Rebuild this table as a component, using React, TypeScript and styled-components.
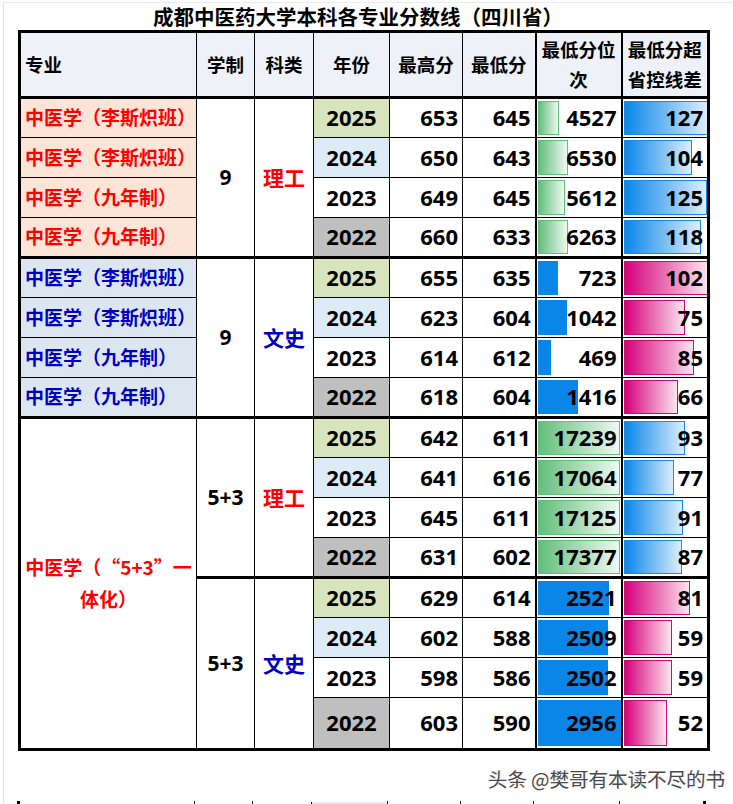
import React from "react";
import styled, { createGlobalStyle, css } from "styled-components";

const CJK = `"Noto Sans CJK SC", "Noto Sans", sans-serif`;
const NUM = `"Noto Sans", "Noto Sans CJK SC", sans-serif`;

const GlobalStyle = createGlobalStyle`
  html, body { margin: 0; padding: 0; background: #ffffff; }
  body { font-family: ${CJK}; color: #000; }
`;

type Tone = "red" | "blue";
type BarKind = "green" | "blue" | "solid" | "pink";

const toneColor: Record<Tone, string> = { red: "#FF0000", blue: "#0000C0" };

const yearBg: Record<number, string> = {
  2025: "#D8E4BC",
  2024: "#DDEBF7",
  2023: "#FFFFFF",
  2022: "#BFBFBF",
};

const COLS = [177, 58, 59, 76, 73, 73, 86, 87];

const Page = styled.main`
  width: 730px;
  height: 802px;
  margin: 2px 0 0 3px;
  overflow: hidden;
  box-sizing: border-box;
  padding-left: 14px;
  border-left: 1px solid #e4e4e4;
  border-top: 1px solid #ececec;
  background: #fff;
`;

const Title = styled.h1`
  margin: 0;
  width: 692px;
  height: 27px;
  line-height: 26px;
  padding-right: 12px;
  box-sizing: border-box;
  text-align: center;
  font-family: ${CJK};
  font-size: 20.5px;
  font-weight: 700;
  color: #000;
  white-space: nowrap;
`;

const Sheet = styled.table`
  border-collapse: collapse;
  table-layout: fixed;
  width: 692px;
  border: 3px solid #000;
`;

const Row = styled.tr<{ $h: number }>`
  height: ${(p) => p.$h}px;
`;

const cellBase = css<{ $top?: boolean; $thickLeft?: boolean }>`
  border: 1px solid #000;
  padding: 0 0 2px;
  vertical-align: middle;
  font-weight: 700;
  overflow: hidden;
  ${(p) => p.$top && "border-top: 3px solid #000;"}
  ${(p) => p.$thickLeft && "border-left: 2px solid #000;"}
`;

const HeadCell = styled.th<{ $left?: boolean; $thickLeft?: boolean }>`
  ${cellBase}
  background: #EEF1F7;
  border-bottom: 3px solid #000;
  font-family: ${CJK};
  font-size: 18.5px;
  line-height: 30px;
  text-align: ${(p) => (p.$left ? "left" : "center")};
  padding: 0 ${(p) => (p.$left ? "0" : "1px")} 2px ${(p) => (p.$left ? "4px" : "1px")};
`;

const MajorCell = styled.td<{ $top?: boolean; $bg: string; $tone: Tone; $center?: boolean }>`
  ${cellBase}
  background: ${(p) => p.$bg};
  color: ${(p) => toneColor[p.$tone]};
  font-family: ${CJK};
  font-size: 19px;
  line-height: 32px;
  text-align: ${(p) => (p.$center ? "center" : "left")};
  padding: 0 4px 2px 4px;
  white-space: ${(p) => (p.$center ? "normal" : "nowrap")};
  text-spacing-trim: space-all;
`;

const Quote = styled.span`
  font-feature-settings: "fwid" 1;
`;

const SystemCell = styled.td<{ $top?: boolean }>`
  ${cellBase}
  font-family: ${NUM};
  font-size: 21px;
  text-align: center;
  color: #000;
`;

const SubjectCell = styled.td<{ $top?: boolean; $tone: Tone }>`
  ${cellBase}
  font-family: ${CJK};
  font-size: 21px;
  text-align: center;
  color: ${(p) => toneColor[p.$tone]};
`;

const YearCell = styled.td<{ $top?: boolean; $year: number }>`
  ${cellBase}
  background: ${(p) => yearBg[p.$year]};
  font-family: ${NUM};
  font-size: 22px;
  text-align: center;
`;

const NumCell = styled.td<{ $top?: boolean; $thickLeft?: boolean }>`
  ${cellBase}
  font-family: ${NUM};
  font-size: 22px;
  text-align: right;
  padding-right: 4px;
`;

const BarCell = styled(NumCell)`
  position: relative;
`;

const barFill: Record<BarKind, string> = {
  green: "border: 1px solid #63BE7B; background: linear-gradient(to right, #63BE7B 0%, #EEF8F1 100%);",
  blue: "border: 1px solid #1A8AE6; background: linear-gradient(to right, #0A86E8 0%, #DCEEFC 100%);",
  solid: "background: #0A86E8;",
  pink: "border: 1px solid #C5106F; background: linear-gradient(to right, #D6007B 0%, #FBE4F0 100%);",
};

const Bar = styled.span<{ $kind: BarKind }>`
  position: absolute;
  left: 1px;
  top: 2px;
  bottom: 2px;
  box-sizing: border-box;
  ${(p) => barFill[p.$kind]}
`;

const Value = styled.span`
  position: relative;
  z-index: 1;
`;

const Watermark = styled.div`
  margin-top: 16px;
  height: 24px;
  line-height: 24px;
  padding-right: 8px;
  text-align: right;
  font-family: ${CJK};
  font-size: 19.5px;
  font-weight: 400;
  color: #4a4a4a;
  text-shadow: 1px 1px 0 #fff, -1px -1px 0 #fff, 1px 0 1px #bbb;
  white-space: nowrap;
`;

const Stub = styled.div`
  margin-top: 10px;
  display: grid;
  grid-template-columns: ${COLS.map((c) => `${c}px`).join(" ")};
  width: 692px;
  height: 12px;
  margin-left: -1px;
`;

const StubCell = styled.div<{ $first?: boolean; $last?: boolean; $bg?: string }>`
  border-left: ${(p) => (p.$first ? "3px" : "1px")} solid #000;
  ${(p) => p.$last && "border-right: 3px solid #000;"}
  background: ${(p) => p.$bg ?? "transparent"};
  margin-top: ${(p) => (p.$bg ? "1px" : "0")};
`;

type DataRow = {
  year: number;
  hi: number;
  lo: number;
  rank: number;
  diff: number;
  rankW: number;
  diffW: number;
};

type Group = {
  system: string;
  subject: string;
  tone: Tone;
  majors?: string[];
  majorBg?: string;
  spanMajor?: boolean;
  spanRows?: number;
  rankKind: BarKind;
  diffKind: BarKind;
  rows: DataRow[];
};

const groups: Group[] = [
  {
    system: "9",
    subject: "理工",
    tone: "red",
    majorBg: "#FCE4D6",
    majors: ["中医学（李斯炽班）", "中医学（李斯炽班）", "中医学（九年制）", "中医学（九年制）"],
    rankKind: "green",
    diffKind: "blue",
    rows: [
      { year: 2025, hi: 653, lo: 645, rank: 4527, diff: 127, rankW: 21, diffW: 84 },
      { year: 2024, hi: 650, lo: 643, rank: 6530, diff: 104, rankW: 30, diffW: 68 },
      { year: 2023, hi: 649, lo: 645, rank: 5612, diff: 125, rankW: 27, diffW: 83 },
      { year: 2022, hi: 660, lo: 633, rank: 6263, diff: 118, rankW: 30, diffW: 77 },
    ],
  },
  {
    system: "9",
    subject: "文史",
    tone: "blue",
    majorBg: "#DCE6F1",
    majors: ["中医学（李斯炽班）", "中医学（李斯炽班）", "中医学（九年制）", "中医学（九年制）"],
    rankKind: "solid",
    diffKind: "pink",
    rows: [
      { year: 2025, hi: 655, lo: 635, rank: 723, diff: 102, rankW: 20, diffW: 84 },
      { year: 2024, hi: 623, lo: 604, rank: 1042, diff: 75, rankW: 29, diffW: 61 },
      { year: 2023, hi: 614, lo: 612, rank: 469, diff: 85, rankW: 13, diffW: 70 },
      { year: 2022, hi: 618, lo: 604, rank: 1416, diff: 66, rankW: 40, diffW: 54 },
    ],
  },
  {
    system: "5+3",
    subject: "理工",
    tone: "red",
    spanMajor: true,
    spanRows: 8,
    rankKind: "green",
    diffKind: "blue",
    rows: [
      { year: 2025, hi: 642, lo: 611, rank: 17239, diff: 93, rankW: 82, diffW: 61 },
      { year: 2024, hi: 641, lo: 616, rank: 17064, diff: 77, rankW: 82, diffW: 50 },
      { year: 2023, hi: 645, lo: 611, rank: 17125, diff: 91, rankW: 82, diffW: 59 },
      { year: 2022, hi: 631, lo: 602, rank: 17377, diff: 87, rankW: 82, diffW: 58 },
    ],
  },
  {
    system: "5+3",
    subject: "文史",
    tone: "blue",
    rankKind: "solid",
    diffKind: "pink",
    rows: [
      { year: 2025, hi: 629, lo: 614, rank: 2521, diff: 81, rankW: 71, diffW: 66 },
      { year: 2024, hi: 602, lo: 588, rank: 2509, diff: 59, rankW: 70, diffW: 48 },
      { year: 2023, hi: 598, lo: 586, rank: 2502, diff: 59, rankW: 70, diffW: 48 },
      { year: 2022, hi: 603, lo: 590, rank: 2956, diff: 52, rankW: 83, diffW: 43 },
    ],
  },
];

export default function App() {
  const totalRows = groups.reduce((n, g) => n + g.rows.length, 0);
  let index = 0;
  return (
    <>
      <GlobalStyle />
      <Page>
        <Title>成都中医药大学本科各专业分数线（四川省）</Title>
        <Sheet>
          <colgroup>
            {COLS.map((w, i) => (
              <col key={i} style={{ width: w }} />
            ))}
          </colgroup>
          <thead>
            <Row $h={66}>
              <HeadCell $left>专业</HeadCell>
              <HeadCell>学制</HeadCell>
              <HeadCell>科类</HeadCell>
              <HeadCell>年份</HeadCell>
              <HeadCell>最高分</HeadCell>
              <HeadCell>最低分</HeadCell>
              <HeadCell $thickLeft>最低分位次</HeadCell>
              <HeadCell $thickLeft>最低分超省控线差</HeadCell>
            </Row>
          </thead>
          <tbody>
            {groups.map((g) =>
              g.rows.map((r, i) => {
                index += 1;
                const top = i === 0;
                const last = index === totalRows;
                return (
                  <Row $h={last ? 52 : 40} key={`${g.system}-${g.subject}-${r.year}`}>
                    {g.majors && (
                      <MajorCell $top={top} $bg={g.majorBg!} $tone={g.tone}>
                        {g.majors[i]}
                      </MajorCell>
                    )}
                    {g.spanMajor && top && (
                      <MajorCell $top $bg="#FFFFFF" $tone={g.tone} $center rowSpan={g.spanRows}>
                        中医学（<Quote>“</Quote>5+3<Quote>”</Quote>一体化）
                      </MajorCell>
                    )}
                    {top && (
                      <>
                        <SystemCell $top rowSpan={g.rows.length}>
                          {g.system}
                        </SystemCell>
                        <SubjectCell $top $tone={g.tone} rowSpan={g.rows.length}>
                          {g.subject}
                        </SubjectCell>
                      </>
                    )}
                    <YearCell $top={top} $year={r.year}>
                      {r.year}
                    </YearCell>
                    <NumCell $top={top}>{r.hi}</NumCell>
                    <NumCell $top={top}>{r.lo}</NumCell>
                    <BarCell $top={top} $thickLeft>
                      <Bar $kind={g.rankKind} style={{ width: r.rankW }} />
                      <Value>{r.rank}</Value>
                    </BarCell>
                    <BarCell $top={top} $thickLeft>
                      <Bar $kind={g.diffKind} style={{ width: r.diffW }} />
                      <Value>{r.diff}</Value>
                    </BarCell>
                  </Row>
                );
              })
            )}
          </tbody>
        </Sheet>
        <Watermark>头条 @樊哥有本读不尽的书</Watermark>
        <Stub>
          {COLS.map((w, i) => (
            <StubCell
              key={i}
              $first={i === 0}
              $last={i === COLS.length - 1}
              $bg={i === 3 ? "#DDEBF7" : undefined}
            />
          ))}
        </Stub>
      </Page>
    </>
  );
}
